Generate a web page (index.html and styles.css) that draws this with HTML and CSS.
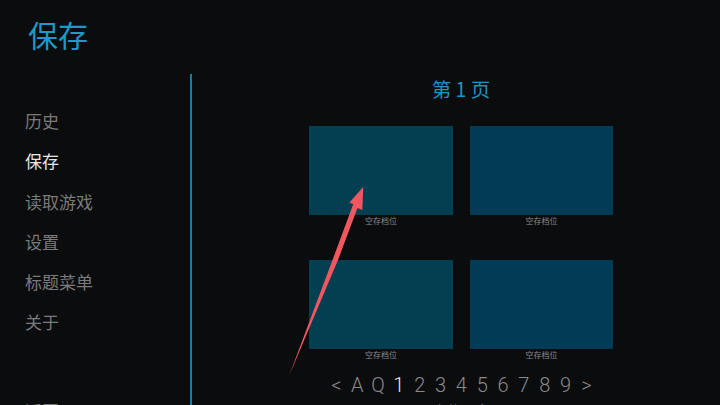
FILE: index.html
```html
<!DOCTYPE html>
<html lang="zh">
<head>
<meta charset="utf-8">
<title>保存</title>
<link rel="stylesheet" href="styles.css">
</head>
<body>
<div class="screen">
  <aside class="side">
    <h1 class="title">保存</h1>
    <nav class="menu">
      <span class="item">历史</span>
      <span class="item current">保存</span>
      <span class="item">读取游戏</span>
      <span class="item">设置</span>
      <span class="item">标题菜单</span>
      <span class="item">关于</span>
      <span class="item back">返回</span>
    </nav>
  </aside>
  <div class="rule"></div>
  <main class="main">
    <div class="page-title">第 1 页</div>
    <div class="slots">
      <div class="slot"><div class="thumb"></div><div class="cap">空存档位</div></div>
      <div class="slot"><div class="thumb alt"></div><div class="cap">空存档位</div></div>
      <div class="slot"><div class="thumb"></div><div class="cap">空存档位</div></div>
      <div class="slot"><div class="thumb alt"></div><div class="cap">空存档位</div></div>
    </div>
    <div class="pager">
      <span>&lt;</span><span>A</span><span>Q</span><span class="on">1</span><span>2</span><span>3</span><span>4</span><span>5</span><span>6</span><span>7</span><span>8</span><span>9</span><span>&gt;</span>
    </div>
    <div class="sync">上传同步</div>
  </main>
  <svg class="arrow" viewBox="0 0 720 405" aria-hidden="true">
    <path d="M289 376 L332.5 260 L353.3 204 L349.3 202.7 L363.3 186.7 L362.3 210 L357.5 208 L338 260 Z" fill="#f2575f"/>
  </svg>
</div>
</body>
</html>
```
FILE: styles.css
```css
html, body { margin: 0; padding: 0; background: #0b0c0e; }
.screen {
  position: relative;
  width: 720px;
  height: 405px;
  overflow: hidden;
  display: flex;
  font-family: "Noto Sans CJK SC", "Roboto", sans-serif;
  background: #0b0c0e;
}
.side { width: 190px; flex: none; padding-left: 25px; box-sizing: border-box; }
.title {
  margin: 13px 0 0 3px;
  font-size: 30px;
  line-height: 42px;
  font-weight: 400;
  color: #1a9ac6;
}
.menu { display: flex; flex-direction: column; margin-top: 54px; }
.item {
  flex: none;
  font-size: 17px;
  line-height: 24px;
  height: 40.3px;
  font-weight: 400;
  color: #7a7a7a;
}
.item.current { color: #e6e6e6; }
.item.back { margin-top: 48px; }
.rule { width: 2px; flex: none; margin-top: 74px; background: #1a7ba6; }
.main { flex: none; width: 538px; display: flex; flex-direction: column; }
.page-title {
  margin-top: 74px;
  text-align: center;
  font-size: 19.5px;
  line-height: 30px;
  font-weight: 400;
  color: #1a95c1;
}
.slots {
  margin: 22px 0 0 117px;
  display: grid;
  grid-template-columns: 144px 143px;
  column-gap: 17px;
  row-gap: 34px;
}
.slot { display: flex; flex-direction: column; align-items: center; }
.thumb { width: 100%; height: 89px; background: #033e51; }
.thumb.alt { background: #023b56; }
.cap { font-size: 8px; line-height: 11px; color: #8a8a8a; }
.pager {
  margin: 12px 0 0 134px;
  display: flex;
  font-family: "Roboto", sans-serif;
  font-size: 20px;
  line-height: 26px;
  font-weight: 300;
  color: #8a8a8a;
}
.pager span { flex: none; width: 20.83px; text-align: center; }
.pager .on { color: #e6e6e6; }
.sync {
  text-align: center;
  font-size: 14px;
  line-height: 20px;
  color: #8a8a8a;
  margin-top: 2px;
}
.arrow { position: absolute; left: 0; top: 0; width: 720px; height: 405px; pointer-events: none; }
```
